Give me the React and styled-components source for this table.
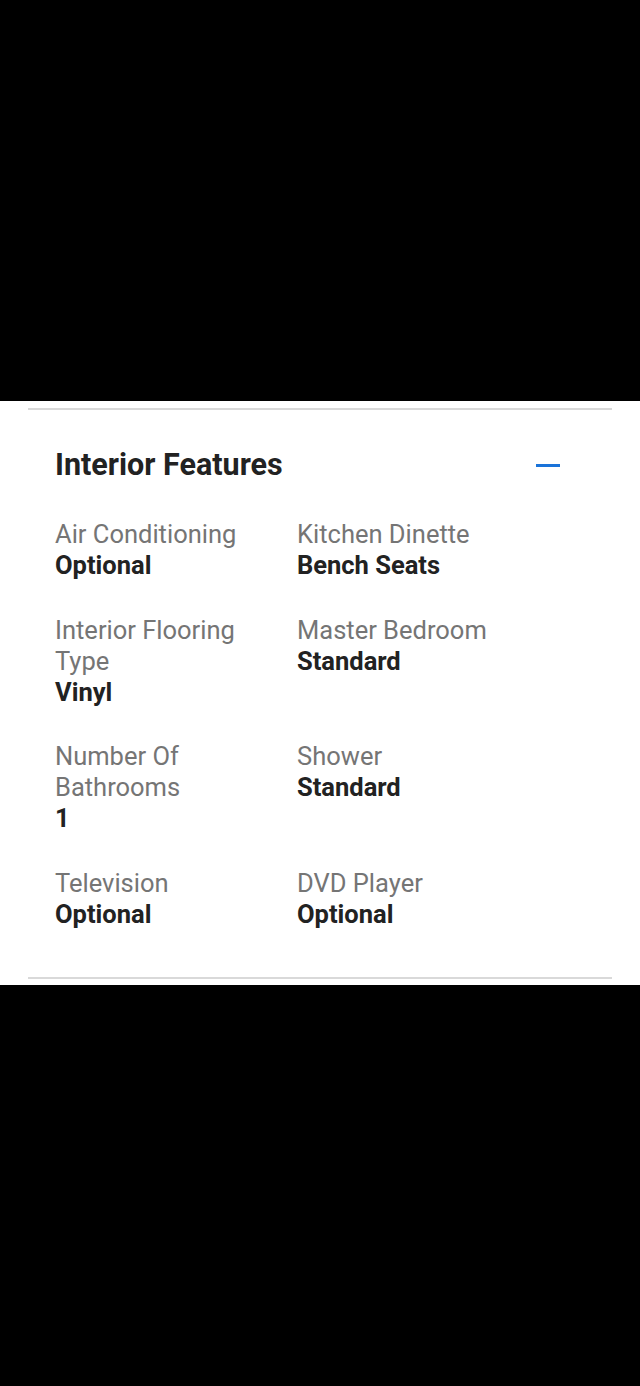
import styled, { createGlobalStyle } from "styled-components";

const features = [
  { label: "Air Conditioning", value: "Optional" },
  { label: "Kitchen Dinette", value: "Bench Seats" },
  { label: "Interior Flooring Type", value: "Vinyl" },
  { label: "Master Bedroom", value: "Standard" },
  { label: "Number Of Bathrooms", value: "1" },
  { label: "Shower", value: "Standard" },
  { label: "Television", value: "Optional" },
  { label: "DVD Player", value: "Optional" },
];

const GlobalStyle = createGlobalStyle`
  body {
    margin: 0;
    background-color: #000;
    font-family: Roboto, "Liberation Sans", sans-serif;
  }
`;

const App = () => {
  return (
    <>
      <GlobalStyle />
      <Page>
        <Backdrop />
        <Sheet>
          <Panel>
            <Header>
              <Title>Interior Features</Title>
              <CollapseButton aria-label="Collapse">
                <svg width="24" height="3" viewBox="0 0 24 3">
                  <rect width="24" height="3" fill="#1a73d9" />
                </svg>
              </CollapseButton>
            </Header>
            <FeatureGrid>
              {features.map((f) => (
                <Feature key={f.label}>
                  <Label>{f.label}</Label>
                  <Value>{f.value}</Value>
                </Feature>
              ))}
            </FeatureGrid>
          </Panel>
        </Sheet>
        <Backdrop $fill />
      </Page>
    </>
  );
};

const Page = styled.div`
  display: flex;
  flex-direction: column;
  min-height: 1386px;
`;

const Backdrop = styled.div`
  height: 401px;
  flex: ${(p) => (p.$fill ? "1" : "none")};
  background-color: #000;
`;

const Sheet = styled.section`
  background-color: #fff;
  padding: 7px 28px 6px;
`;

const Panel = styled.div`
  border-top: 2px solid #d9d9d9;
  border-bottom: 2px solid #d9d9d9;
  padding: 37px 27px 47.5px;
`;

const Header = styled.div`
  display: flex;
  align-items: center;
  justify-content: space-between;
  padding-right: 25px;
`;

const Title = styled.h2`
  margin: 0;
  font-size: 30.5px;
  line-height: 36px;
  font-weight: 700;
  color: #222;
`;

const CollapseButton = styled.button`
  display: flex;
  align-items: center;
  padding: 0;
  border: none;
  background: transparent;
  cursor: pointer;
`;

const FeatureGrid = styled.div`
  display: grid;
  grid-template-columns: 242px 1fr;
  row-gap: 33.5px;
  margin-top: 36px;
`;

const Feature = styled.div`
  display: flex;
  flex-direction: column;
  padding-right: 20px;
  font-size: 25.5px;
  line-height: 31px;
`;

const Label = styled.span`
  color: #757575;
`;

const Value = styled.span`
  color: #222;
  font-weight: 700;
`;

export default App;
